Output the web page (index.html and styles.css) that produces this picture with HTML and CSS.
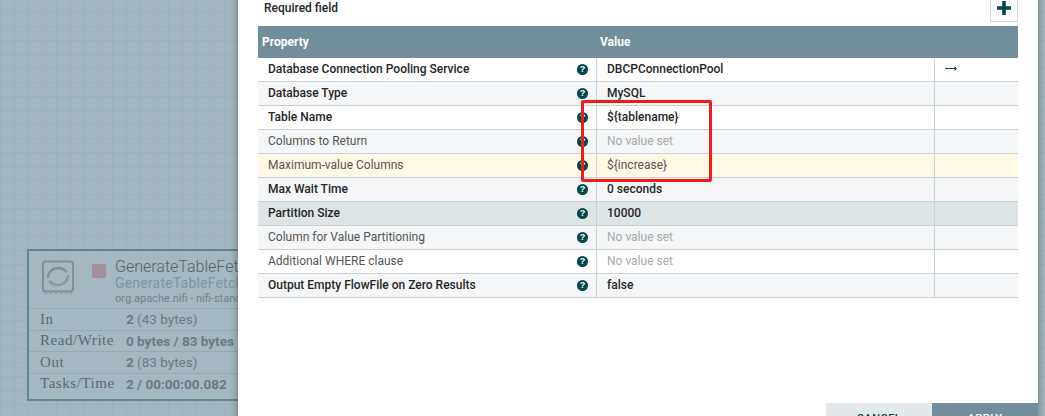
FILE: index.html
```html
<!DOCTYPE html>
<html lang="en">
<head>
    <meta charset="UTF-8">
    <meta name="viewport" content="width=device-width, initial-scale=1.0">
    <title>Configure Processor</title>
    <link rel="stylesheet" href="styles.css">
</head>
<body>
    <div class="canvas">
        <div class="node">
            <div class="node-head">
                <svg class="node-icon" width="34" height="36" viewBox="0 0 34 36">
                    <rect x="2" y="1.500" width="30" height="30" rx="3" fill="none" stroke="#7f9097" stroke-width="2"/>
                    <path d="M1 6h1M1 11h1M1 16h1M1 21h1M1 26h1M5 33v1M10 33v1M15 33v1M20 33v1M25 33v1M30 33v1" stroke="#7f9097" stroke-width="1.500"/>
                    <path d="M7 18a10 10 0 0 1 10-10c4 0 6 1 9 4" fill="none" stroke="#7f9097" stroke-width="2.500"/>
                    <path d="M27 15a10 10 0 0 1-10 10c-4 0-6-1-9-4" fill="none" stroke="#8a9ba2" stroke-width="2.500"/>
                </svg>
                <span class="node-stop"></span>
                <div class="node-names">
                    <div class="node-name">GenerateTableFetch</div>
                    <div class="node-type">GenerateTableFetch 1.7.1</div>
                    <div class="node-bundle">org.apache.nifi - nifi-standard-nar</div>
                </div>
            </div>
            <div class="node-row"><span class="node-label">In</span><span class="node-val"><b>2</b> (43 bytes)</span></div>
            <div class="node-row"><span class="node-label">Read/Write</span><span class="node-val"><b>0 bytes / 83 bytes</b></span></div>
            <div class="node-row"><span class="node-label">Out</span><span class="node-val"><b>2</b> (83 bytes)</span></div>
            <div class="node-row"><span class="node-label">Tasks/Time</span><span class="node-val"><b>2 / 00:00:00.082</b></span></div>
        </div>
    </div>

    <div class="dialog">
        <div class="required">
            <span>Required field</span>
            <button class="add-btn" aria-label="Add property">
                <svg width="14" height="14" viewBox="0 0 14 14"><path d="M5.200 0h3.600v5.200H14v3.600H8.800V14H5.200V8.800H0V5.200h5.200z" fill="#004849"/></svg>
            </button>
        </div>

        <div class="table">
            <div class="thead">
                <div class="col-prop">Property</div>
                <div class="col-value">Value</div>
            </div>

            <div class="row odd strong">
                <div class="cell-name"><span>Database Connection Pooling Service</span><i class="help">?</i></div>
                <div class="cell-value">DBCPConnectionPool</div>
                <div class="cell-action">
                    <svg class="goto" width="12" height="5" viewBox="0 0 12 5"><path d="M0 2h9.500V0L12 2.500 9.500 5V3H0z" fill="#004849"/></svg>
                </div>
            </div>
            <div class="row even strong">
                <div class="cell-name"><span>Database Type</span><i class="help">?</i></div>
                <div class="cell-value">MySQL</div>
                <div class="cell-action"></div>
            </div>
            <div class="row odd strong">
                <div class="cell-name"><span>Table Name</span><i class="help">?</i></div>
                <div class="cell-value">${tablename}</div>
                <div class="cell-action"></div>
            </div>
            <div class="row even">
                <div class="cell-name"><span>Columns to Return</span><i class="help">?</i></div>
                <div class="cell-value unset">No value set</div>
                <div class="cell-action"></div>
            </div>
            <div class="row modified">
                <div class="cell-name"><span>Maximum-value Columns</span><i class="help">?</i></div>
                <div class="cell-value">${increase}</div>
                <div class="cell-action"></div>
            </div>
            <div class="row even strong">
                <div class="cell-name"><span>Max Wait Time</span><i class="help">?</i></div>
                <div class="cell-value">0 seconds</div>
                <div class="cell-action"></div>
            </div>
            <div class="row selected strong">
                <div class="cell-name"><span>Partition Size</span><i class="help">?</i></div>
                <div class="cell-value">10000</div>
                <div class="cell-action"></div>
            </div>
            <div class="row even">
                <div class="cell-name"><span>Column for Value Partitioning</span><i class="help">?</i></div>
                <div class="cell-value unset">No value set</div>
                <div class="cell-action"></div>
            </div>
            <div class="row odd">
                <div class="cell-name"><span>Additional WHERE clause</span><i class="help">?</i></div>
                <div class="cell-value unset">No value set</div>
                <div class="cell-action"></div>
            </div>
            <div class="row even strong">
                <div class="cell-name"><span>Output Empty FlowFile on Zero Results</span><i class="help">?</i></div>
                <div class="cell-value">false</div>
                <div class="cell-action"></div>
            </div>
        </div>

        <div class="buttons">
            <button class="btn btn-cancel">CANCEL</button>
            <button class="btn btn-apply">APPLY</button>
        </div>
    </div>

    <div class="highlight"></div>
</body>
</html>
```

FILE: styles.css
```css
* {
    box-sizing: border-box;
}

html,
body {
    height: 100%;
}

body {
    margin: 0;
    overflow: hidden;
    font-family: Roboto, Arial, sans-serif;
    font-size: 12px;
    color: #262626;
    background-color: #a3b6bf;
}

.canvas {
    position: absolute;
    inset: 0;
    background-color: #a3b6bf;
    background-image:
        linear-gradient(#9cb0ba 1px, transparent 1px),
        linear-gradient(90deg, #9cb0ba 1px, transparent 1px);
    background-size: 14px 14px;
    background-position: 0 -2px;
}

.node {
    position: absolute;
    left: 27px;
    top: 249px;
    width: 260px;
    height: 152px;
    border: 2px solid #5f8890;
    background: #a5b8c1;
    overflow: hidden;
}

.node-head {
    display: flex;
    height: 57px;
    padding: 9px 0 0 12px;
}

.node-icon {
    flex: none;
}

.node-stop {
    width: 14px;
    height: 14px;
    margin: 4px 9px 0 17px;
    background: #a48f9a;
    flex: none;
}

.node-names {
    margin-top: -2px;
    white-space: nowrap;
}

.node-name {
    font-size: 16px;
    line-height: 17px;
    font-weight: 300;
    color: #56656d;
}

.node-type {
    font-size: 14px;
    line-height: 16px;
    letter-spacing: 0.2px;
    color: #7d95a3;
}

.node-bundle {
    font-size: 11px;
    line-height: 15px;
    color: #71828b;
}

.node-row {
    display: flex;
    align-items: center;
    height: 21.500px;
    padding-left: 11px;
    border-top: 1px solid #93a9b3;
    white-space: nowrap;
    color: #6d7a82;
    font-size: 13.500px;
}

.node-label {
    width: 86px;
    font-family: "Liberation Serif", serif;
    font-size: 15px;
    letter-spacing: 0.55px;
    color: #5b6a72;
}

.node-val b {
    font-weight: 700;
}

.dialog {
    position: absolute;
    left: 238px;
    top: -10px;
    width: 800px;
    height: 440px;
    padding: 10px 20px 0;
    background: #fff;
    box-shadow: 0 0 8px 1px rgba(0, 0, 0, 0.3);
    display: flex;
    flex-direction: column;
}

.required {
    display: flex;
    justify-content: space-between;
    align-items: flex-start;
    height: 26px;
    padding: 1px 0 0 6px;
    font-weight: 500;
    font-size: 12px;
    line-height: 15px;
}

.add-btn {
    width: 28px;
    height: 29px;
    margin-top: -8px;
    padding: 0;
    border: 1px solid #cfd8dc;
    background: #fff;
    display: flex;
    align-items: center;
    justify-content: center;
    flex: none;
}

.thead {
    display: flex;
    height: 32px;
    align-items: center;
    background: #728e9b;
    color: #fff;
    font-weight: 700;
}

.col-prop {
    width: 338px;
    padding-left: 4px;
}

.col-value {
    padding-left: 4px;
}

.row {
    display: flex;
    height: 24px;
    border-bottom: 1px solid #c7d2d7;
    line-height: 23px;
    color: #555;
}

.strong {
    font-weight: 500;
    color: #262626;
}

.odd {
    background: #fff;
}

.even {
    background: #f4f6f7;
}

.modified {
    background: #fff9e6;
}

.selected {
    background: #dde4e6;
}

.cell-name {
    width: 338px;
    padding: 0 8px 0 10px;
    display: flex;
    justify-content: space-between;
    align-items: center;
}

.cell-value {
    width: 338px;
    padding-left: 10px;
    border-left: 1px solid #c7d2d7;
}

.unset {
    color: #aaa;
    font-weight: 400;
}

.cell-action {
    flex: 1;
    padding-left: 10px;
    border-left: 1px solid #c7d2d7;
}

.goto {
    display: block;
    margin-top: 8px;
}

.help {
    width: 11px;
    height: 11px;
    border-radius: 50%;
    background: #004849;
    color: #fff;
    font: 700 9px/11px "Liberation Sans", sans-serif;
    text-align: center;
}

.buttons {
    position: absolute;
    right: 0;
    bottom: -4px;
    display: flex;
}

.btn {
    width: 106px;
    height: 31px;
    border: 0;
    padding: 0;
    font-family: Roboto, Arial, sans-serif;
    font-size: 11px;
    font-weight: 500;
    letter-spacing: 0.5px;
}

.btn-cancel {
    background: #e3e8eb;
    color: #004849;
}

.btn-apply {
    background: #728e9b;
    color: #fff;
}

/* red box drawn on top of the screenshot */
.highlight {
    position: absolute;
    left: 581px;
    top: 100px;
    width: 131px;
    height: 82px;
    border: 3px solid #f01c1c;
    border-radius: 2px;
}
```
